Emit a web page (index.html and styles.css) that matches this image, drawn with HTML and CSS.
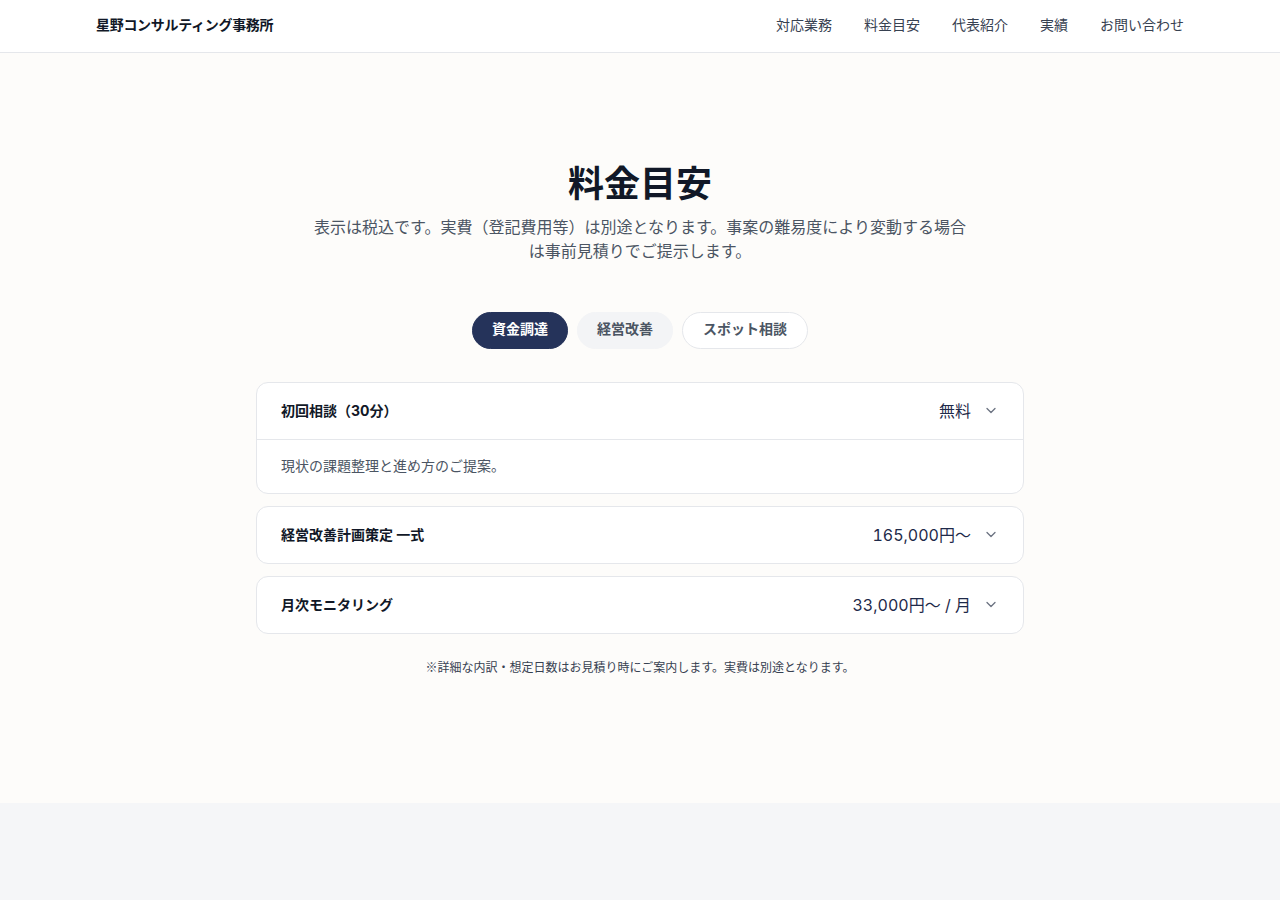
FILE: index.html
```html
<!DOCTYPE html>
<html lang="ja">
<head>
<meta charset="utf-8">
<title>料金目安</title>
<link rel="stylesheet" href="styles.css">
</head>
<body>
<header class="site-header">
  <div class="header-inner">
    <div class="brand">星野コンサルティング事務所</div>
    <nav class="nav">
      <a href="#">対応業務</a>
      <a href="#">料金目安</a>
      <a href="#">代表紹介</a>
      <a href="#">実績</a>
      <a href="#">お問い合わせ</a>
    </nav>
  </div>
</header>
<main>
  <section class="pricing">
    <h2 class="title">料金目安</h2>
    <p class="lead">表示は税込です。実費（登記費用等）は別途となります。事案の難易度により変動する場合は事前見積りでご提示します。</p>
    <div class="tabs">
      <button class="tab tab-active">資金調達</button>
      <button class="tab tab-soft">経営改善</button>
      <button class="tab tab-outline">スポット相談</button>
    </div>
    <div class="accordion">
      <div class="item">
        <div class="item-head">
          <span class="item-title">初回相談（30分）</span>
          <span class="item-right"><span class="price">無料</span>
            <svg class="chev" viewBox="0 0 16 16" width="16" height="16"><path d="M4 6.5l4 4 4-4" fill="none" stroke="#6b7280" stroke-width="1.3" stroke-linecap="round" stroke-linejoin="round"/></svg></span>
        </div>
        <div class="item-body">現状の課題整理と進め方のご提案。</div>
      </div>
      <div class="item">
        <div class="item-head">
          <span class="item-title">経営改善計画策定 一式</span>
          <span class="item-right"><span class="price">165,000円〜</span>
            <svg class="chev" viewBox="0 0 16 16" width="16" height="16"><path d="M4 6.5l4 4 4-4" fill="none" stroke="#6b7280" stroke-width="1.3" stroke-linecap="round" stroke-linejoin="round"/></svg></span>
        </div>
      </div>
      <div class="item">
        <div class="item-head">
          <span class="item-title">月次モニタリング</span>
          <span class="item-right"><span class="price">33,000円〜 / 月</span>
            <svg class="chev" viewBox="0 0 16 16" width="16" height="16"><path d="M4 6.5l4 4 4-4" fill="none" stroke="#6b7280" stroke-width="1.3" stroke-linecap="round" stroke-linejoin="round"/></svg></span>
        </div>
      </div>
    </div>
    <p class="note"><span class="mark">※</span>詳細な内訳・想定日数はお見積り時にご案内します。実費は別途となります。</p>
  </section>
</main>
</body>
</html>
```

FILE: styles.css
```css
* { box-sizing: border-box; }
html, body {
  margin: 0;
  padding: 0;
}
body {
  font-family: Inter, "Noto Sans CJK JP", sans-serif;
  background: #f5f6f8;
  color: #111827;
}
.site-header {
  background: #ffffff;
  border-bottom: 1px solid #e5e7eb;
}
.header-inner {
  height: 52px;
  padding: 0 96px 2px;
  display: flex;
  align-items: center;
  justify-content: space-between;
}
.brand {
  font-size: 14px;
  line-height: 20px;
  font-weight: 700;
  color: #111827;
  letter-spacing: -0.3px;
}
.nav {
  display: flex;
  gap: 32px;
}
.nav a {
  font-size: 14px;
  line-height: 20px;
  color: #374151;
  text-decoration: none;
}
.pricing {
  background: #fdfcfa;
  padding: 107px 0 126px;
  display: flex;
  flex-direction: column;
  align-items: center;
}
.title {
  margin: 0;
  font-size: 36px;
  line-height: 48px;
  font-weight: 700;
  color: #111827;
}
.lead {
  margin: 7px 0 0;
  max-width: 672px;
  padding: 0 6px;
  text-align: center;
  font-size: 16px;
  line-height: 24px;
  color: #4b5563;
}
.tabs {
  margin-top: 49px;
  display: flex;
  gap: 9px;
}
.tab {
  height: 37px;
  padding: 0 19px 4px;
  border-radius: 999px;
  font-family: inherit;
  font-size: 14px;
  line-height: 20px;
  font-weight: 700;
  border: 1px solid transparent;
  cursor: pointer;
}
.tab-active {
  background: #25335a;
  color: #ffffff;
  border-color: #25335a;
}
.tab-soft {
  background: #f3f4f6;
  color: #4b5563;
  border-color: #f3f4f6;
}
.tab-outline {
  background: #ffffff;
  color: #4b5563;
  border-color: #e5e7eb;
  padding: 0 20px 4px;
}
.accordion {
  margin-top: 33px;
  width: 768px;
  display: flex;
  flex-direction: column;
  gap: 12px;
}
.item {
  background: #ffffff;
  border: 1px solid #e5e7eb;
  border-radius: 12px;
  overflow: hidden;
}
.item-head {
  height: 56px;
  padding: 0 24px 2px;
  display: flex;
  align-items: center;
  justify-content: space-between;
}
.item-title {
  font-size: 14px;
  font-weight: 700;
  color: #111827;
}
.item-right {
  display: flex;
  align-items: center;
  gap: 12px;
}
.price {
  font-size: 16px;
  color: #1e2a4a;
  font-variant-numeric: tabular-nums;
}
.chev {
  display: block;
}
.item-body {
  border-top: 1px solid #e5e7eb;
  padding: 15px 24px 16px;
  font-size: 14px;
  line-height: 22px;
  color: #4b5563;
}
.note {
  margin: 24px 0 0;
  font-size: 12px;
  line-height: 18px;
  color: #374151;
  text-align: center;
}
.mark {
  font-family: "Noto Sans CJK JP", sans-serif;
}
```
